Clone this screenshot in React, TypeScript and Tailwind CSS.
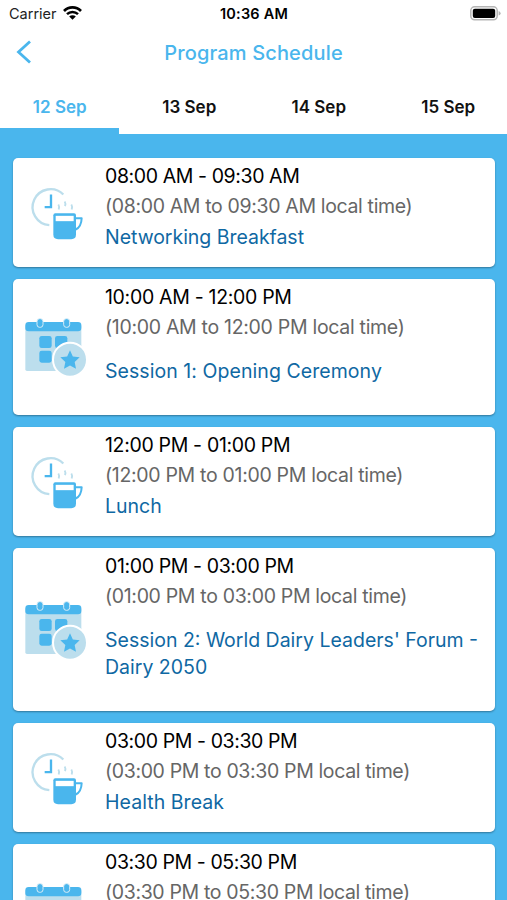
import clsx from "clsx";

type Session = {
  time: string;
  local: string;
  title?: string;
  type: "break" | "session";
  timeClass: string;
  localClass: string;
  titleClass?: string;
  height: string;
};

const days = ["12 Sep", "13 Sep", "14 Sep", "15 Sep"];

const sessions: Session[] = [
  {
    time: "08:00 AM - 09:30 AM",
    local: "(08:00 AM to 09:30 AM local time)",
    title: "Networking Breakfast",
    type: "break",
    timeClass: "tracking-[-0.4px]",
    localClass: "tracking-[-0.35px]",
    titleClass: "tracking-[-0.03px]",
    height: "h-[109px]",
  },
  {
    time: "10:00 AM - 12:00 PM",
    local: "(10:00 AM to 12:00 PM local time)",
    title: "Session 1: Opening Ceremony",
    type: "session",
    timeClass: "tracking-[-0.31px]",
    localClass: "tracking-[-0.3px]",
    titleClass: "tracking-[0.06px]",
    height: "h-[136px]",
  },
  {
    time: "12:00 PM - 01:00 PM",
    local: "(12:00 PM to 01:00 PM local time)",
    title: "Lunch",
    type: "break",
    timeClass: "tracking-[-0.33px]",
    localClass: "tracking-[-0.31px]",
    titleClass: "tracking-[0px]",
    height: "h-[109px]",
  },
  {
    time: "01:00 PM - 03:00 PM",
    local: "(01:00 PM to 03:00 PM local time)",
    title: "Session 2: World Dairy Leaders' Forum - Dairy 2050",
    type: "session",
    timeClass: "tracking-[-0.38px]",
    localClass: "tracking-[-0.33px]",
    titleClass: "tracking-[0px]",
    height: "h-[163px]",
  },
  {
    time: "03:00 PM - 03:30 PM",
    local: "(03:00 PM to 03:30 PM local time)",
    title: "Health Break",
    type: "break",
    timeClass: "tracking-[-0.4px]",
    localClass: "tracking-[-0.36px]",
    titleClass: "tracking-[0.05px]",
    height: "h-[109px]",
  },
  {
    time: "03:30 PM - 05:30 PM",
    local: "(03:30 PM to 05:30 PM local time)",
    type: "session",
    timeClass: "tracking-[-0.4px]",
    localClass: "tracking-[-0.35px]",
    height: "h-[136px]",
  },
];

const BreakIcon = () => (
  <svg width="70" height="70" viewBox="0 -7.5 210 210" fill="none">
    <path d="M130 42A54 54 0 1 0 88 134" stroke="#bcdeec" strokeWidth="7" />
    <path d="M93 42v38H74" stroke="#4ab6ed" strokeWidth="7" />
    <path
      d="M115 72q4 6 1 15M134 63q4 6 1 14M154 72q4 6 1 15"
      stroke="#bcdeec"
      strokeWidth="5.5"
    />
    <path
      d="M100 104q0-6 6-6h56q6 0 6 6v58q0 14-14 14h-40q-14 0-14-14z"
      fill="#4ab6ed"
    />
    <path d="M107 106h54v16h-54z" fill="#fff" />
    <path
      d="M167 113h18q-1 26-18 34"
      stroke="#4ab6ed"
      strokeWidth="6"
      strokeLinejoin="round"
    />
  </svg>
);

const SessionIcon = () => (
  <svg width="70" height="70" viewBox="0 6 210 210">
    <path d="M16 48h168v130q0 5-5 5H21q-5 0-5-5z" fill="#bcdeed" />
    <rect x="16" y="36" width="168" height="28" rx="10" fill="#4ab6ed" />
    <g fill="#4ab6ed" stroke="#d8edf7" strokeWidth="3">
      <rect x="51" y="26" width="18" height="26" rx="8" />
      <rect x="131" y="26" width="18" height="26" rx="8" />
    </g>
    <g fill="#4ab6ed">
      <rect x="58" y="78" width="37" height="36" rx="7" />
      <rect x="105" y="78" width="37" height="36" rx="7" />
      <rect x="58" y="122" width="37" height="36" rx="7" />
    </g>
    <circle cx="150" cy="149" r="51" fill="#bcdeed" stroke="#fff" strokeWidth="6" />
    <path
      d="M150 121l8.5 18.5 20.5 2.5-15 14 4 20.5-18-10-18 10 4-20.5-15-14 20.5-2.5z"
      fill="#4ab6ed"
    />
  </svg>
);

const StatusBar = () => (
  <div className="grid h-7 grid-cols-3 items-center pl-[9px] pr-[6px] text-[14.5px] text-black">
    <div className="flex items-center gap-[6px]">
      <span className="text-[#222]">Carrier</span>
      <svg className="mb-[2px]" width="19" height="14" viewBox="0 0 19 14" fill="none" stroke="#000">
        <path d="M1 5a12 12 0 0 1 17 0" strokeWidth="2.7" />
        <path d="M4 8.2a7.800 7.800 0 0 1 11 0" strokeWidth="2.5" />
        <path d="M9.5 13.8L6.2 10.6a4.700 4.700 0 0 1 6.600 0z" fill="#000" stroke="none" />
      </svg>
    </div>
    <span className="pr-[2px] text-center font-semibold tracking-[0.2px]">10:36 AM</span>
    <svg className="mb-[2px] justify-self-end" width="31" height="15" viewBox="0 0 31 15">
      <rect x="0.8" y="0.8" width="26.4" height="13" rx="3.8" fill="#fff" stroke="#b5b5b5" strokeWidth="1.5" />
      <rect x="2.8" y="2.7" width="22.4" height="9.2" rx="2" fill="#000" />
      <path d="M28.6 5q2 .7 2 2.300t-2 2.300z" fill="#b5b5b5" />
    </svg>
  </div>
);

const SessionCard = ({ session }: { session: Session }) => {
  const isBreak = session.type === "break";

  return (
    <div
      className={clsx(
        "flex shrink-0 rounded-[5px] bg-white pl-[7px] shadow-[0_1px_2px_rgba(0,0,0,0.35)]",
        session.height
      )}
    >
      <div className="flex shrink-0 items-center">
        {isBreak ? <BreakIcon /> : <SessionIcon />}
      </div>
      <div className="flex-1 pl-[15px] pt-[3px] text-[19.5px]">
        <p className={clsx("whitespace-nowrap leading-[30px] text-black", session.timeClass)}>
          {session.time}
        </p>
        <p className={clsx("whitespace-nowrap leading-[30px] text-[#666]", session.localClass)}>
          {session.local}
        </p>
        {session.title && (
          <p
            className={clsx(
              "leading-[27px] text-[#0f68a3]",
              isBreak ? "mt-[3px]" : "mt-[16px]",
              session.titleClass
            )}
          >
            {session.title}
          </p>
        )}
      </div>
    </div>
  );
};

const App = () => {
  return (
    <div className="flex h-[900px] w-[507px] flex-col overflow-hidden bg-[#4ab6ed] font-['Inter',sans-serif]">
      <header className="bg-white">
        <StatusBar />
        <div className="grid h-12 grid-cols-[60px_1fr_60px] items-center">
          <svg className="ml-[16px]" width="16" height="24" viewBox="0 0 16 24" fill="none">
            <path d="M14 1.5L2.5 12l11.500 10.500" stroke="#4ab6ed" strokeWidth="2.8" />
          </svg>
          <h1 className="pt-[2px] text-center text-[20px] font-medium tracking-[0.15px] text-[#4ab6ed]">
            Program Schedule
          </h1>
        </div>
        <div className="flex h-[58px] gap-[11px]">
          {days.map((day, i) => (
            <button
              key={day}
              className={clsx(
                "h-full w-[118.5px] shrink-0 border-b-[6px] pl-[1px] pt-[11px] text-[17px] font-semibold",
                i === 0 ? "border-[#4ab6ed] text-[#4ab6ed]" : "border-white text-[#111]"
              )}
            >
              {day}
            </button>
          ))}
        </div>
      </header>
      <main className="flex flex-col gap-3 pl-[13px] pr-[12px] pt-6">
        {sessions.map((session) => (
          <SessionCard key={session.time} session={session} />
        ))}
      </main>
    </div>
  );
};

export default App;
